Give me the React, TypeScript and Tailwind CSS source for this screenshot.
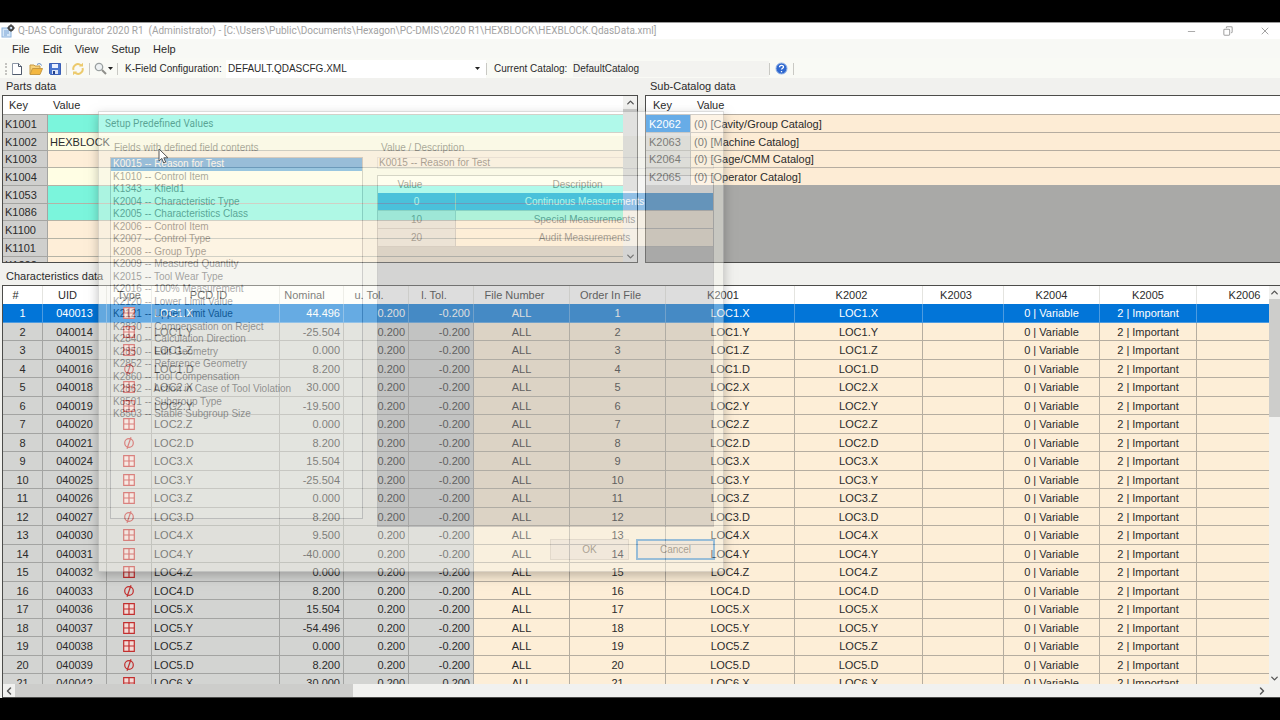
import React, { useState } from "react"
import { ChevronDown, ChevronLeft, ChevronRight, ChevronUp, Copy, Minus, X } from "lucide-react"

type Tone = "cyan" | "yellow" | "linen"

const toneClass: Record<Tone, string> = {
  cyan: "bg-[#7bf5dc]",
  yellow: "bg-[#fffee4]",
  linen: "bg-[#feeed8]",
}

const parts: { key: string; value: string; tone: Tone }[] = [
  { key: "K1001", value: "", tone: "cyan" },
  { key: "K1002", value: "HEXBLOCK", tone: "yellow" },
  { key: "K1003", value: "", tone: "linen" },
  { key: "K1004", value: "", tone: "yellow" },
  { key: "K1053", value: "", tone: "cyan" },
  { key: "K1086", value: "", tone: "cyan" },
  { key: "K1100", value: "", tone: "linen" },
  { key: "K1101", value: "", tone: "linen" },
  { key: "K1202", value: "", tone: "linen" },
]

const catalogs = [
  { key: "K2062", value: "(0) [Cavity/Group Catalog]" },
  { key: "K2063", value: "(0) [Machine Catalog]" },
  { key: "K2064", value: "(0) [Gage/CMM Catalog]" },
  { key: "K2065", value: "(0) [Operator Catalog]" },
]

const characteristics = [
  { uid: "040013", id: "LOC1.X", nominal: "44.496" },
  { uid: "040014", id: "LOC1.Y", nominal: "-25.504" },
  { uid: "040015", id: "LOC1.Z", nominal: "0.000" },
  { uid: "040016", id: "LOC1.D", nominal: "8.200" },
  { uid: "040018", id: "LOC2.X", nominal: "30.000" },
  { uid: "040019", id: "LOC2.Y", nominal: "-19.500" },
  { uid: "040020", id: "LOC2.Z", nominal: "0.000" },
  { uid: "040021", id: "LOC2.D", nominal: "8.200" },
  { uid: "040024", id: "LOC3.X", nominal: "15.504" },
  { uid: "040025", id: "LOC3.Y", nominal: "-25.504" },
  { uid: "040026", id: "LOC3.Z", nominal: "0.000" },
  { uid: "040027", id: "LOC3.D", nominal: "8.200" },
  { uid: "040030", id: "LOC4.X", nominal: "9.500" },
  { uid: "040031", id: "LOC4.Y", nominal: "-40.000" },
  { uid: "040032", id: "LOC4.Z", nominal: "0.000" },
  { uid: "040033", id: "LOC4.D", nominal: "8.200" },
  { uid: "040036", id: "LOC5.X", nominal: "15.504" },
  { uid: "040037", id: "LOC5.Y", nominal: "-54.496" },
  { uid: "040038", id: "LOC5.Z", nominal: "0.000" },
  { uid: "040039", id: "LOC5.D", nominal: "8.200" },
  { uid: "040042", id: "LOC6.X", nominal: "30.000" },
]

const columns = [
  { label: "#", width: "w-[40px]", sortable: true },
  { label: "UID", width: "w-[64px]", sortable: true },
  { label: "Type", width: "w-[45px]", sortable: false },
  { label: "PCD ID", width: "w-[128px]", sortable: true },
  { label: "Nominal", width: "w-[64px]", sortable: true },
  { label: "u. Tol.", width: "w-[65px]", sortable: true },
  { label: "l. Tol.", width: "w-[65px]", sortable: true },
  { label: "File Number", width: "w-[96px]", sortable: true },
  { label: "Order In File", width: "w-[96px]", sortable: true },
  { label: "K2001", width: "w-[129px]", sortable: true },
  { label: "K2002", width: "w-[128px]", sortable: true },
  { label: "K2003", width: "w-[81px]", sortable: true },
  { label: "K2004", width: "w-[96px]", sortable: false },
  { label: "K2005", width: "w-[97px]", sortable: false },
  { label: "K2006", width: "w-[96px]", sortable: false },
]

const fields = [
  "K0015 -- Reason for Test",
  "K1010 -- Control Item",
  "K1343 -- Kfield1",
  "K2004 -- Characteristic Type",
  "K2005 -- Characteristics Class",
  "K2006 -- Control Item",
  "K2007 -- Control Type",
  "K2008 -- Group Type",
  "K2009 -- Measured Quantity",
  "K2015 -- Tool Wear Type",
  "K2016 -- 100% Measurement",
  "K2120 -- Lower Limit Value",
  "K2121 -- Upper Limit Value",
  "K2830 -- Compensation on Reject",
  "K2840 -- Calculation Direction",
  "K2850 -- Edit Geometry",
  "K2852 -- Reference Geometry",
  "K2860 -- Tool Compensation",
  "K2862 -- Action in Case of Tool Violation",
  "K8501 -- Subgroup Type",
  "K8503 -- Stable Subgroup Size",
]

const predefined = [
  { value: "0", description: "Continuous Measurements" },
  { value: "10", description: "Special Measurements" },
  { value: "20", description: "Audit Measurements" },
]

function AppIcon() {
  return (
    <svg width="14" height="14" viewBox="0 0 14 14" fill="none">
      <rect x="1" y="4" width="9" height="9" fill="#d5e6f7" stroke="#8cb2db" />
      <path d="M3 7h5M3 9h5M3 11h3" stroke="#7aa5d6" />
      <circle cx="10" cy="4" r="2.2" stroke="#444" strokeWidth="1.8" />
      <path d="M10 0v1.5M10 6.500v1.500M6 4h1.500M12.500 4H14" stroke="#444" />
    </svg>
  )
}

function NewIcon() {
  return (
    <svg width="14" height="14" viewBox="0 0 14 14">
      <path d="M2.500 1.500h6l3 3v8h-9z" fill="#fff" stroke="#8d97a6" />
      <path d="M8.500 1.500v3h3v8h-9" fill="none" stroke="#4f5a6b" />
    </svg>
  )
}

function OpenIcon() {
  return (
    <svg width="14" height="14" viewBox="0 0 14 14">
      <path d="M1 12V3h4l1 1h5v3" fill="#f7d27a" stroke="#c79a42" />
      <path d="M1 12.500 3.500 6.500h10L11 12.500z" fill="#f3b73f" stroke="#c79a42" />
      <path d="M8 2.500c2-1.500 4-1 4.500 1" fill="none" stroke="#5b86c0" />
    </svg>
  )
}

function SaveIcon() {
  return (
    <svg width="14" height="14" viewBox="0 0 14 14">
      <path d="M1.500 1.500h11v11h-10l-1-1z" fill="#4a76cf" stroke="#3b5fb5" />
      <rect x="4" y="2" width="6" height="4" fill="#eaf1ff" />
      <rect x="4" y="8" width="6" height="4" fill="#dbe4f5" />
      <rect x="5" y="9" width="2" height="3" fill="#23408a" />
    </svg>
  )
}

function RefreshIcon() {
  return (
    <svg width="14" height="14" viewBox="0 0 14 14" fill="none" stroke="#ecca6c" strokeWidth="2">
      <path d="M2.500 8a4.500 4.500 0 0 1 7.500-4.500" />
      <path d="M11.500 6a4.500 4.500 0 0 1-7.500 4.500" />
      <path d="M8 4.500h4V.8zM6 9.500H2v3.700z" fill="#ecca6c" stroke="none" />
    </svg>
  )
}

function FindIcon() {
  return (
    <svg width="13" height="13" viewBox="0 0 13 13" fill="none">
      <circle cx="5" cy="5" r="3.700" fill="#eef2f3" stroke="#9aa0a0" strokeWidth="1.300" />
      <path d="m8 8 4 4" stroke="#8f8f8a" strokeWidth="2" />
    </svg>
  )
}

function HelpIcon() {
  return (
    <svg width="13" height="13" viewBox="0 0 13 13" fill="none">
      <circle cx="6.500" cy="6.500" r="5.500" fill="#2f68cf" stroke="#93b3e6" />
      <path d="M4.500 5.200c0-2.600 4-2.400 4-.3 0 1.300-2 1.300-2 2.700M6.500 9v1.200" stroke="#fff" strokeWidth="1.300" />
    </svg>
  )
}

function Caret() {
  return (
    <svg width="5" height="3" viewBox="0 0 5 3">
      <path d="M0 0h5L2.500 3z" fill="#222" />
    </svg>
  )
}

function PositionIcon() {
  return (
    <svg className="mx-auto" width="12" height="12" viewBox="0 0 12 12">
      <path d="M.7.700h10.600v10.600H.7zM6 1v10M1 6h10" fill="#f3dcd8" stroke="#c22f2f" strokeWidth="1.200" />
    </svg>
  )
}

function DiameterIcon() {
  return (
    <svg className="mx-auto" width="12" height="12" viewBox="0 0 12 12" fill="none" stroke="#c22f2f" strokeWidth="1.200">
      <circle cx="6" cy="6" r="4.300" />
      <path d="M8 .3 4 11.700" />
    </svg>
  )
}

function Separator() {
  return <span className="h-3 w-px shrink-0 bg-[#c9c9c4]" />
}

function TitleBar() {
  return (
    <header className="flex h-[16px] items-center bg-white pl-px font-[Roboto,sans-serif] text-[10px] text-[#a3a3a3]">
      <AppIcon />
      <h1 className="ml-[3px] flex-1 whitespace-pre">
        {"Q-DAS Configurator 2020 R1  (Administrator) - [C:\\Users\\Public\\Documents\\Hexagon\\PC-DMIS\\2020 R1\\HEXBLOCK\\HEXBLOCK.QdasData.xml]"}
      </h1>
      <div className="flex items-center gap-[26px] pr-[9px]">
        <button aria-label="Minimize"><Minus size={11} strokeWidth={2} /></button>
        <button aria-label="Restore"><Copy className="-scale-x-100" size={10} strokeWidth={2.500} /></button>
        <button aria-label="Close"><X size={12} strokeWidth={2} /></button>
      </div>
    </header>
  )
}

function MenuBar() {
  return (
    <nav className="flex h-[19px] items-center gap-[13px] bg-[#f8f9f5] pt-px pl-3">
      {["File", "Edit", "View", "Setup", "Help"].map(item => (
        <button key={item}>{item}</button>
      ))}
    </nav>
  )
}

function ToolBar() {
  return (
    <div className="flex h-[20px] items-center bg-[#f9faf5] pt-px text-[10px] whitespace-nowrap">
      <span className="mr-[3px] ml-[5px] h-3 border-l-2 border-dotted border-[#c4c4c0]" />
      <div className="flex items-center gap-[5px]">
        <button aria-label="New"><NewIcon /></button>
        <button aria-label="Open"><OpenIcon /></button>
        <button aria-label="Save"><SaveIcon /></button>
      </div>
      <div className="ml-1 flex items-center gap-1">
        <Separator />
        <button aria-label="Refresh"><RefreshIcon /></button>
        <Separator />
        <button aria-label="Find" className="flex items-center gap-px"><FindIcon /><Caret /></button>
        <Separator />
      </div>
      <label htmlFor="config" className="ml-[7px] w-[101px]">K-Field Configuration:</label>
      <div className="flex h-[18px] w-[260px] items-center bg-white">
        <select id="config" className="w-full appearance-none bg-transparent pl-[2px] outline-none">
          <option>DEFAULT.QDASCFG.XML</option>
        </select>
        <span className="mr-[6px]"><Caret /></span>
      </div>
      <Separator />
      <label htmlFor="catalog" className="ml-[7px] w-[79px]">Current Catalog:</label>
      <input id="catalog" readOnly defaultValue="DefaultCatalog" className="h-4 w-[196px] bg-[#f3f3f0] outline-none" />
      <Separator />
      <button aria-label="Help" className="mx-[5px]"><HelpIcon /></button>
      <Separator />
    </div>
  )
}

function PartsPanel() {
  return (
    <section className="flex min-w-0 flex-col">
      <h2 className="h-[17px] pl-[6px] leading-[17px]">Parts data</h2>
      <div className="mx-[2px] flex h-[168px] overflow-hidden border border-[#4c4c4a] bg-white">
        <table className="min-w-0 flex-1 table-fixed border-separate border-spacing-0 self-start">
          <thead>
            <tr className="h-[18px]">
              <th className="w-[45px] p-0 pl-[6px] text-left font-normal">Key</th>
              <th className="p-0 pl-[5px] text-left font-normal">Value</th>
            </tr>
          </thead>
          <tbody>
            {parts.map(p => (
              <tr key={p.key} className="h-[18px] [&:nth-child(3n)]:h-[17px]">
                <td className="border-t border-r border-[#a5a5a2] bg-[#cfcfcd] p-0 pl-[2px]">{p.key}</td>
                <td className={`border-t border-[#b5b3a6] p-0 pl-[2px] ${toneClass[p.tone]}`}>{p.value}</td>
              </tr>
            ))}
          </tbody>
        </table>
        <div className="flex w-[14px] flex-col items-center justify-between bg-[#f1f1ef] text-[#555]">
          <ChevronUp className="my-px" size={11} strokeWidth={3} />
          <span className="w-full flex-1 bg-[#cdcdcb]" />
          <span className="h-[60px]" />
          <ChevronDown size={11} strokeWidth={3} />
        </div>
      </div>
    </section>
  )
}

function CatalogPanel() {
  return (
    <section className="flex min-w-0 flex-col">
      <h2 className="h-[17px] pl-[10px] leading-[17px]">Sub-Catalog data</h2>
      <div className="ml-[5px] h-[168px] overflow-hidden border border-r-0 border-[#4c4c4a] bg-[#a9a9a7]">
        <table className="w-full table-fixed border-separate border-spacing-0">
          <thead>
            <tr className="h-[18px] bg-white">
              <th className="w-[45px] p-0 pl-[7px] text-left font-normal">Key</th>
              <th className="p-0 pl-[6px] text-left font-normal">Value</th>
            </tr>
          </thead>
          <tbody>
            {catalogs.map((c, i) => (
              <tr key={c.key} className="h-[18px] [&:nth-child(3n)]:h-[17px]">
                <td className={`border-t border-r border-[#a5a5a2] p-0 pl-[3px] ${i === 0 ? "bg-[#0275d8] text-white" : "bg-[#cfcfcd]"}`}>{c.key}</td>
                <td className="border-t border-[#b5aca0] bg-[#fdecd5] p-0 pl-[3px]">{c.value}</td>
              </tr>
            ))}
          </tbody>
        </table>
      </div>
    </section>
  )
}

function CharacteristicsPanel() {
  const [selected, setSelected] = useState(0)

  return (
    <section className="flex min-h-0 flex-1 flex-col">
      <h2 className="h-[22px] shrink-0 pl-[6px] leading-[26px]">Characteristics data</h2>
      <div className="ml-[2px] flex min-h-0 flex-1 flex-col border-y border-l border-[#4c4c4a] bg-white">
        <div className="flex min-h-0 flex-1">
          <div className="min-w-0 flex-1 overflow-hidden">
            <table className="w-[1290px] table-fixed border-separate border-spacing-0">
              <thead>
                <tr className="h-[18px]">
                  {columns.map(col => (
                    <th key={col.label} className={`border-r border-[#e4e4e0] p-0 font-normal ${col.width} ${col.sortable ? "pr-[14px]" : ""}`}>
                      {col.label}
                    </th>
                  ))}
                </tr>
              </thead>
              <tbody>
                {characteristics.map((c, i) => {
                  const active = i === selected
                  const base = "border-r border-b p-0 text-center whitespace-nowrap"
                  const grey = `${base} ${active ? "border-[#4d9be0]" : "border-[#a3a4a2] bg-[#d3d4d2]"}`
                  const cream = `${base} ${active ? "border-[#4d9be0]" : "border-[#b5ada0] bg-[#fdeed7]"}`
                  return (
                    <tr
                      key={c.uid}
                      onClick={() => setSelected(i)}
                      className={`h-[18px] odd:h-[19px] ${active ? "bg-[#0275d8] text-white" : ""}`}
                    >
                      <td className={grey}>{i + 1}</td>
                      <td className={grey}>{c.uid}</td>
                      <td className={grey}>{c.id.endsWith("D") ? <DiameterIcon /> : <PositionIcon />}</td>
                      <td className={`${grey} pl-[2px] text-left!`}>{c.id}</td>
                      <td className={`${grey} pr-[3px] text-right!`}>{c.nominal}</td>
                      <td className={`${grey} pr-[3px] text-right!`}>0.200</td>
                      <td className={`${grey} pr-[3px] text-right!`}>-0.200</td>
                      <td className={cream}>ALL</td>
                      <td className={cream}>{i + 1}</td>
                      <td className={cream}>{c.id}</td>
                      <td className={cream}>{c.id}</td>
                      <td className={cream}></td>
                      <td className={cream}>0 | Variable</td>
                      <td className={cream}>2 | Important</td>
                      <td className={cream}></td>
                    </tr>
                  )
                })}
              </tbody>
            </table>
          </div>
          <div className="flex w-[11px] flex-col items-center bg-[#f1f1ef] text-[#555]">
            <ChevronUp className="my-px" size={11} strokeWidth={3} />
            <span className="h-[118px] w-full bg-[#cdcdcb]" />
            <ChevronDown className="mt-auto" size={11} strokeWidth={3} />
          </div>
        </div>
        <div className="flex h-[13px] shrink-0 items-center bg-[#f1f1ef] pr-[12px] text-[#555]">
          <ChevronLeft size={12} strokeWidth={3} />
          <span className="h-full w-[338px] bg-[#cdcdcb]" />
          <ChevronRight className="ml-auto" size={12} strokeWidth={3} />
        </div>
      </div>
    </section>
  )
}

function PredefinedValuesDialog() {
  return (
    <div role="dialog" aria-label="Setup Predefined Values" className="absolute top-[111px] left-[98px] flex h-[461px] w-[626px] flex-col border border-[#aaa] bg-[#f4f4ea] text-[10px] opacity-40 shadow-[0_4px_10px_rgba(0,0,0,0.6)]">
      <h2 className="h-[24px] bg-white pl-[6px] font-[Roboto,sans-serif] text-[10px] leading-[23px]">Setup Predefined Values</h2>
      <div className="flex flex-1 gap-[14px] pr-[9px] pl-[11px]">
        <div className="w-[253px]">
          <h3 className="h-[21px] pl-1 leading-[23px]">Fields with defined field contents</h3>
          <ul role="listbox" className="h-[362px] border border-[#999] bg-[#fdfdf4] leading-3">
            {fields.map((f, i) => (
              <li key={f} role="option" aria-selected={i === 0} className={`h-3 pl-[2px] odd:h-[13px] ${i === 0 ? "bg-[#0275d8] text-white" : ""}`}>
                {f}
              </li>
            ))}
          </ul>
        </div>
        <div className="flex min-w-0 flex-1 flex-col">
          <label htmlFor="field" className="h-[21px] pl-1 leading-[23px]">Value / Description</label>
          <input id="field" readOnly defaultValue="K0015 -- Reason for Test" className="h-[12px] w-full border border-[#ccc] pl-px outline-none" />
          <div className="mt-[6px] h-[352px] border border-[#999] bg-[#ababab]">
            <table className="w-full table-fixed border-separate border-spacing-0 text-center">
              <thead>
                <tr className="h-[17px] bg-white">
                  <th className="w-[78px] p-0 pr-[14px] font-normal">Value</th>
                  <th className="p-0 pr-[14px] font-normal">Description</th>
                </tr>
              </thead>
              <tbody>
                {predefined.map((p, i) => (
                  <tr key={p.value} className={`h-[18px] ${i === 0 ? "bg-[#0275d8] text-white" : "bg-[#fdeed7]"}`}>
                    <td className={`border-r border-b border-[#a0a0a0] p-0 ${i === 0 ? "" : "bg-[#d3d4d2]"}`}>{p.value}</td>
                    <td className="border-b border-[#a0a0a0] p-0">{p.description}</td>
                  </tr>
                ))}
              </tbody>
            </table>
          </div>
        </div>
      </div>
      <div className="flex justify-end gap-[7px] pr-[8px] pb-[11px]">
        <button className="h-[21px] w-[79px] border border-[#bbb] bg-[#e1e1e1]">OK</button>
        <button className="h-[21px] w-[79px] border-2 border-[#0275d8] bg-[#e1e1e1]">Cancel</button>
      </div>
    </div>
  )
}

function Pointer() {
  return (
    <svg className="absolute top-[148px] left-[158px]" width="11" height="17" viewBox="0 0 11 17">
      <path d="M1 1v12l2.800-2.600L5.700 15l2-.9-1.900-4.300H10z" fill="#fff" stroke="#555" />
    </svg>
  )
}

export default function App() {
  return (
    <div className="relative flex h-screen flex-col overflow-hidden bg-black pt-[22px] pb-[22px] font-['Liberation_Sans',Arial,sans-serif] text-[11px] leading-4 text-[#2b2b2b]">
      <main className="flex min-h-0 flex-1 flex-col border-t border-[#999] bg-[#f1f1ee]">
        <TitleBar />
        <MenuBar />
        <ToolBar />
        <div className="grid grid-cols-2">
          <PartsPanel />
          <CatalogPanel />
        </div>
        <CharacteristicsPanel />
      </main>
      <PredefinedValuesDialog />
      <Pointer />
    </div>
  )
}
